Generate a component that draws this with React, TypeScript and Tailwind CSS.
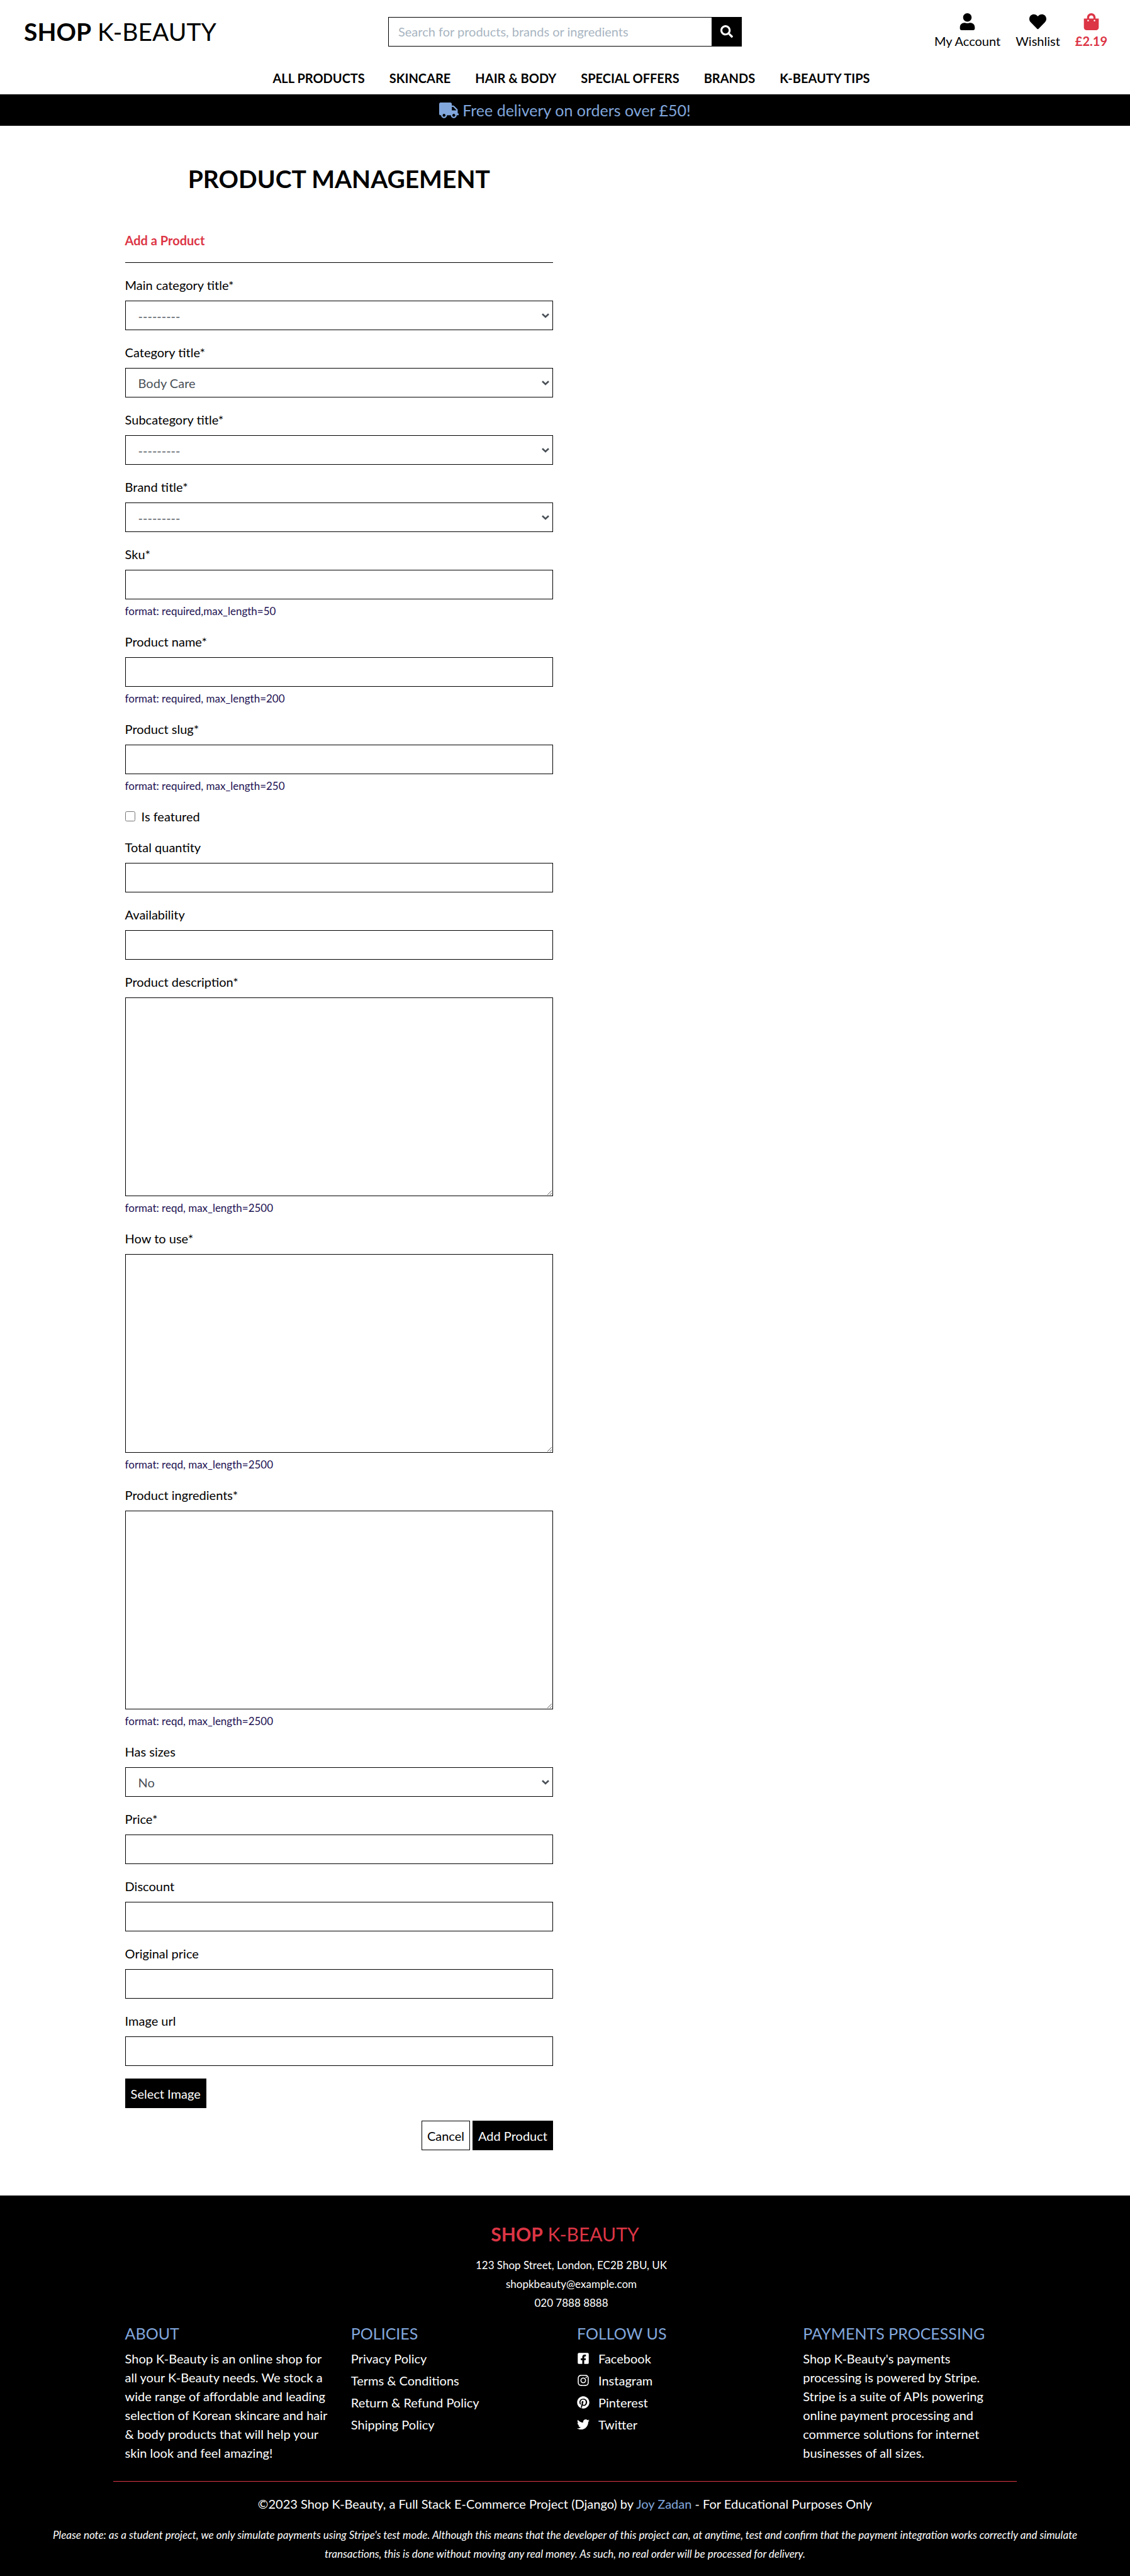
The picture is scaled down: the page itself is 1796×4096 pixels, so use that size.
import React from "react";
import {
  FaFacebookSquare,
  FaHeart,
  FaInstagram,
  FaPinterest,
  FaSearch,
  FaShoppingBag,
  FaTruck,
  FaTwitter,
  FaUser,
} from "react-icons/fa";

type FieldSpec = {
  id: string;
  label: string;
  kind?: "input" | "select" | "textarea" | "checkbox";
  value?: string;
  help?: string;
};

const fields: FieldSpec[] = [
  { id: "main_category", label: "Main category title*", kind: "select", value: "---------" },
  { id: "category", label: "Category title*", kind: "select", value: "Body Care" },
  { id: "subcategory", label: "Subcategory title*", kind: "select", value: "---------" },
  { id: "brand", label: "Brand title*", kind: "select", value: "---------" },
  { id: "sku", label: "Sku*", help: "format: required,max_length=50" },
  { id: "name", label: "Product name*", help: "format: required, max_length=200" },
  { id: "slug", label: "Product slug*", help: "format: required, max_length=250" },
  { id: "featured", label: "Is featured", kind: "checkbox" },
  { id: "quantity", label: "Total quantity" },
  { id: "availability", label: "Availability" },
  { id: "description", label: "Product description*", kind: "textarea", help: "format: reqd, max_length=2500" },
  { id: "how_to_use", label: "How to use*", kind: "textarea", help: "format: reqd, max_length=2500" },
  { id: "ingredients", label: "Product ingredients*", kind: "textarea", help: "format: reqd, max_length=2500" },
  { id: "has_sizes", label: "Has sizes", kind: "select", value: "No" },
  { id: "price", label: "Price*" },
  { id: "discount", label: "Discount" },
  { id: "original_price", label: "Original price" },
  { id: "image_url", label: "Image url" },
];

const navItems = ["ALL PRODUCTS", "SKINCARE", "HAIR & BODY", "SPECIAL OFFERS", "BRANDS", "K-BEAUTY TIPS"];
const policies = ["Privacy Policy", "Terms & Conditions", "Return & Refund Policy", "Shipping Policy"];
const socials = [
  { name: "Facebook", Icon: FaFacebookSquare },
  { name: "Instagram", Icon: FaInstagram },
  { name: "Pinterest", Icon: FaPinterest },
  { name: "Twitter", Icon: FaTwitter },
];

function Field({ id, label, kind = "input", value, help }: FieldSpec) {
  if (kind === "checkbox") {
    return (
      <div className="mb-5 flex h-[29px] items-center">
        <input id={id} type="checkbox" className="size-4" />
        <label htmlFor={id} className="ml-2.5">
          {label}
        </label>
      </div>
    );
  }
  return (
    <div className="mb-5">
      <label htmlFor={id} className="mb-2.5 block">
        {label}
      </label>
      {kind === "select" && (
        <div className="relative">
          <select
            id={id}
            defaultValue={value}
            className="block h-[47px] w-full appearance-none border border-black bg-white px-5 text-[#495057]"
          >
            <option>{value}</option>
          </select>
          <svg
            aria-hidden="true"
            viewBox="0 0 12 8"
            className="pointer-events-none absolute top-5 right-1.5 h-2 w-3"
            fill="none"
            stroke="#495057"
            strokeWidth="2.6"
          >
            <path d="M1 1.2 6 6l5-4.8" />
          </svg>
        </div>
      )}
      {kind === "input" && (
        <input id={id} type="text" className="block h-[47px] w-full border border-black px-4 text-[#495057]" />
      )}
      {kind === "textarea" && (
        <textarea
          id={id}
          className="block h-[316px] w-full resize-y border border-black px-4 py-2 text-[#495057]"
        />
      )}
      {help && <small className="mt-1.5 block text-[17px] leading-[26px] text-[#1d1152]">{help}</small>}
    </div>
  );
}

function FooterColumn({ title, children }: { title: string; children: React.ReactNode }) {
  return (
    <div className="pr-3 pl-[19px]">
      <h2 className="mb-2.5 text-[25px] leading-[30px] text-[#81a7dd]">{title}</h2>
      {children}
    </div>
  );
}

export default function App() {
  return (
    <div className="flex min-h-screen flex-col bg-white font-['Lato',sans-serif] text-xl leading-[30px] text-black">
      <header>
        <div className="grid h-[100px] grid-cols-3 items-center px-9">
          <a href="#" className="pl-0.5 text-[39px] leading-[48px]">
            <strong>SHOP</strong> K-BEAUTY
          </a>
          <form className="flex w-[562px] justify-self-center">
            <input
              type="search"
              aria-label="Search"
              placeholder="Search for products, brands or ingredients"
              className="h-[47px] min-w-0 flex-1 border border-r-0 border-black px-[15px] placeholder:text-[#a8b5c1]"
            />
            <button type="submit" aria-label="Search" className="flex h-[47px] w-[48px] items-center justify-center bg-black text-white">
              <FaSearch size={20} />
            </button>
          </form>
          <div className="flex gap-6 justify-self-end text-center">
            <a href="#" className="flex flex-col items-center gap-0.5">
              <FaUser size={27} />
              My Account
            </a>
            <a href="#" className="flex flex-col items-center gap-0.5">
              <FaHeart size={27} />
              Wishlist
            </a>
            <a href="#" className="flex flex-col items-center gap-0.5 font-bold text-[#dc3545]">
              <FaShoppingBag size={27} />
              £2.19
            </a>
          </div>
        </div>
        <nav className="flex h-[50px] items-center justify-center gap-[39px] pb-0.5 pl-5 font-bold">
          {navItems.map((item) => (
            <a key={item} href="#">
              {item}
            </a>
          ))}
        </nav>
        <div className="flex h-[50px] items-center justify-center gap-1.5 bg-black text-[25px] text-[#81a7dd]">
          <FaTruck className="h-[25px] w-[31px]" />
          <p>Free delivery on orders over £50!</p>
        </div>
      </header>

      <main className="mx-[10%] w-2/5 flex-1 px-[19px] pt-[60px] pb-[70px]">
        <h1 className="text-center text-[39px] leading-[48px] font-bold">PRODUCT MANAGEMENT</h1>
        <h2 className="mt-[59px] font-bold text-[#dc3545]">Add a Product</h2>
        <hr className="my-5 border-black" />
        <form>
          {fields.map((field) => (
            <Field key={field.id} {...field} />
          ))}
          <button type="button" className="flex h-[47px] items-center bg-black px-[9px] text-white">
            Select Image
          </button>
          <div className="mt-5 flex justify-end gap-1">
            <a href="#" className="flex h-[47px] items-center border border-black px-2">
              Cancel
            </a>
            <button type="submit" className="flex h-[47px] items-center bg-black px-[9px] text-white">
              Add Product
            </button>
          </div>
        </form>
      </main>

      <footer className="bg-black pt-[41px] pb-5 text-white">
        <div className="text-center">
          <p className="text-[30px] leading-[40px] text-[#dc3545]">
            <strong>SHOP</strong> K-BEAUTY
          </p>
          <address className="mt-[15px] pl-5 text-[17px] leading-[30px] not-italic">
            <p>123 Shop Street, London, EC2B 2BU, UK</p>
            <p>shopkbeauty@example.com</p>
            <p>020 7888 8888</p>
          </address>
        </div>
        <div className="mx-[10%] mt-[18px] grid grid-cols-4 border-b border-[#dc3545] pb-[30px]">
          <FooterColumn title="ABOUT">
            <p>
              Shop K-Beauty is an online shop for all your K-Beauty needs. We stock a wide range of affordable and
              leading selection of Korean skincare and hair &amp; body products that will help your skin look and feel
              amazing!
            </p>
          </FooterColumn>
          <FooterColumn title="POLICIES">
            <ul className="flex flex-col gap-[5px]">
              {policies.map((name) => (
                <li key={name}>
                  <a href="#">{name}</a>
                </li>
              ))}
            </ul>
          </FooterColumn>
          <FooterColumn title="FOLLOW US">
            <ul className="flex flex-col gap-[5px]">
              {socials.map(({ name, Icon }) => (
                <li key={name}>
                  <a href="#" className="flex items-center gap-3.5">
                    <Icon className="h-5 w-auto" />
                    {name}
                  </a>
                </li>
              ))}
            </ul>
          </FooterColumn>
          <FooterColumn title="PAYMENTS PROCESSING">
            <p>
              Shop K-Beauty's payments processing is powered by Stripe. Stripe is a suite of APIs powering online
              payment processing and commerce solutions for internet businesses of all sizes.
            </p>
          </FooterColumn>
        </div>
        <div className="text-center">
          <p className="mt-5">
            ©2023 Shop K-Beauty, a Full Stack E-Commerce Project (Django) by{" "}
            <a href="#" className="text-[#81a7dd]">
              Joy Zadan
            </a>{" "}
            - For Educational Purposes Only
          </p>
          <p className="mt-5 px-[70px] text-[17px] leading-[30px] italic">
            Please note: as a student project, we only simulate payments using Stripe's test mode. Although this means
            that the developer of this project can, at anytime, test and confirm that the payment integration works
            correctly and simulate transactions, this is done without moving any real money. As such, no real order
            will be processed for delivery.
          </p>
        </div>
      </footer>
    </div>
  );
}
